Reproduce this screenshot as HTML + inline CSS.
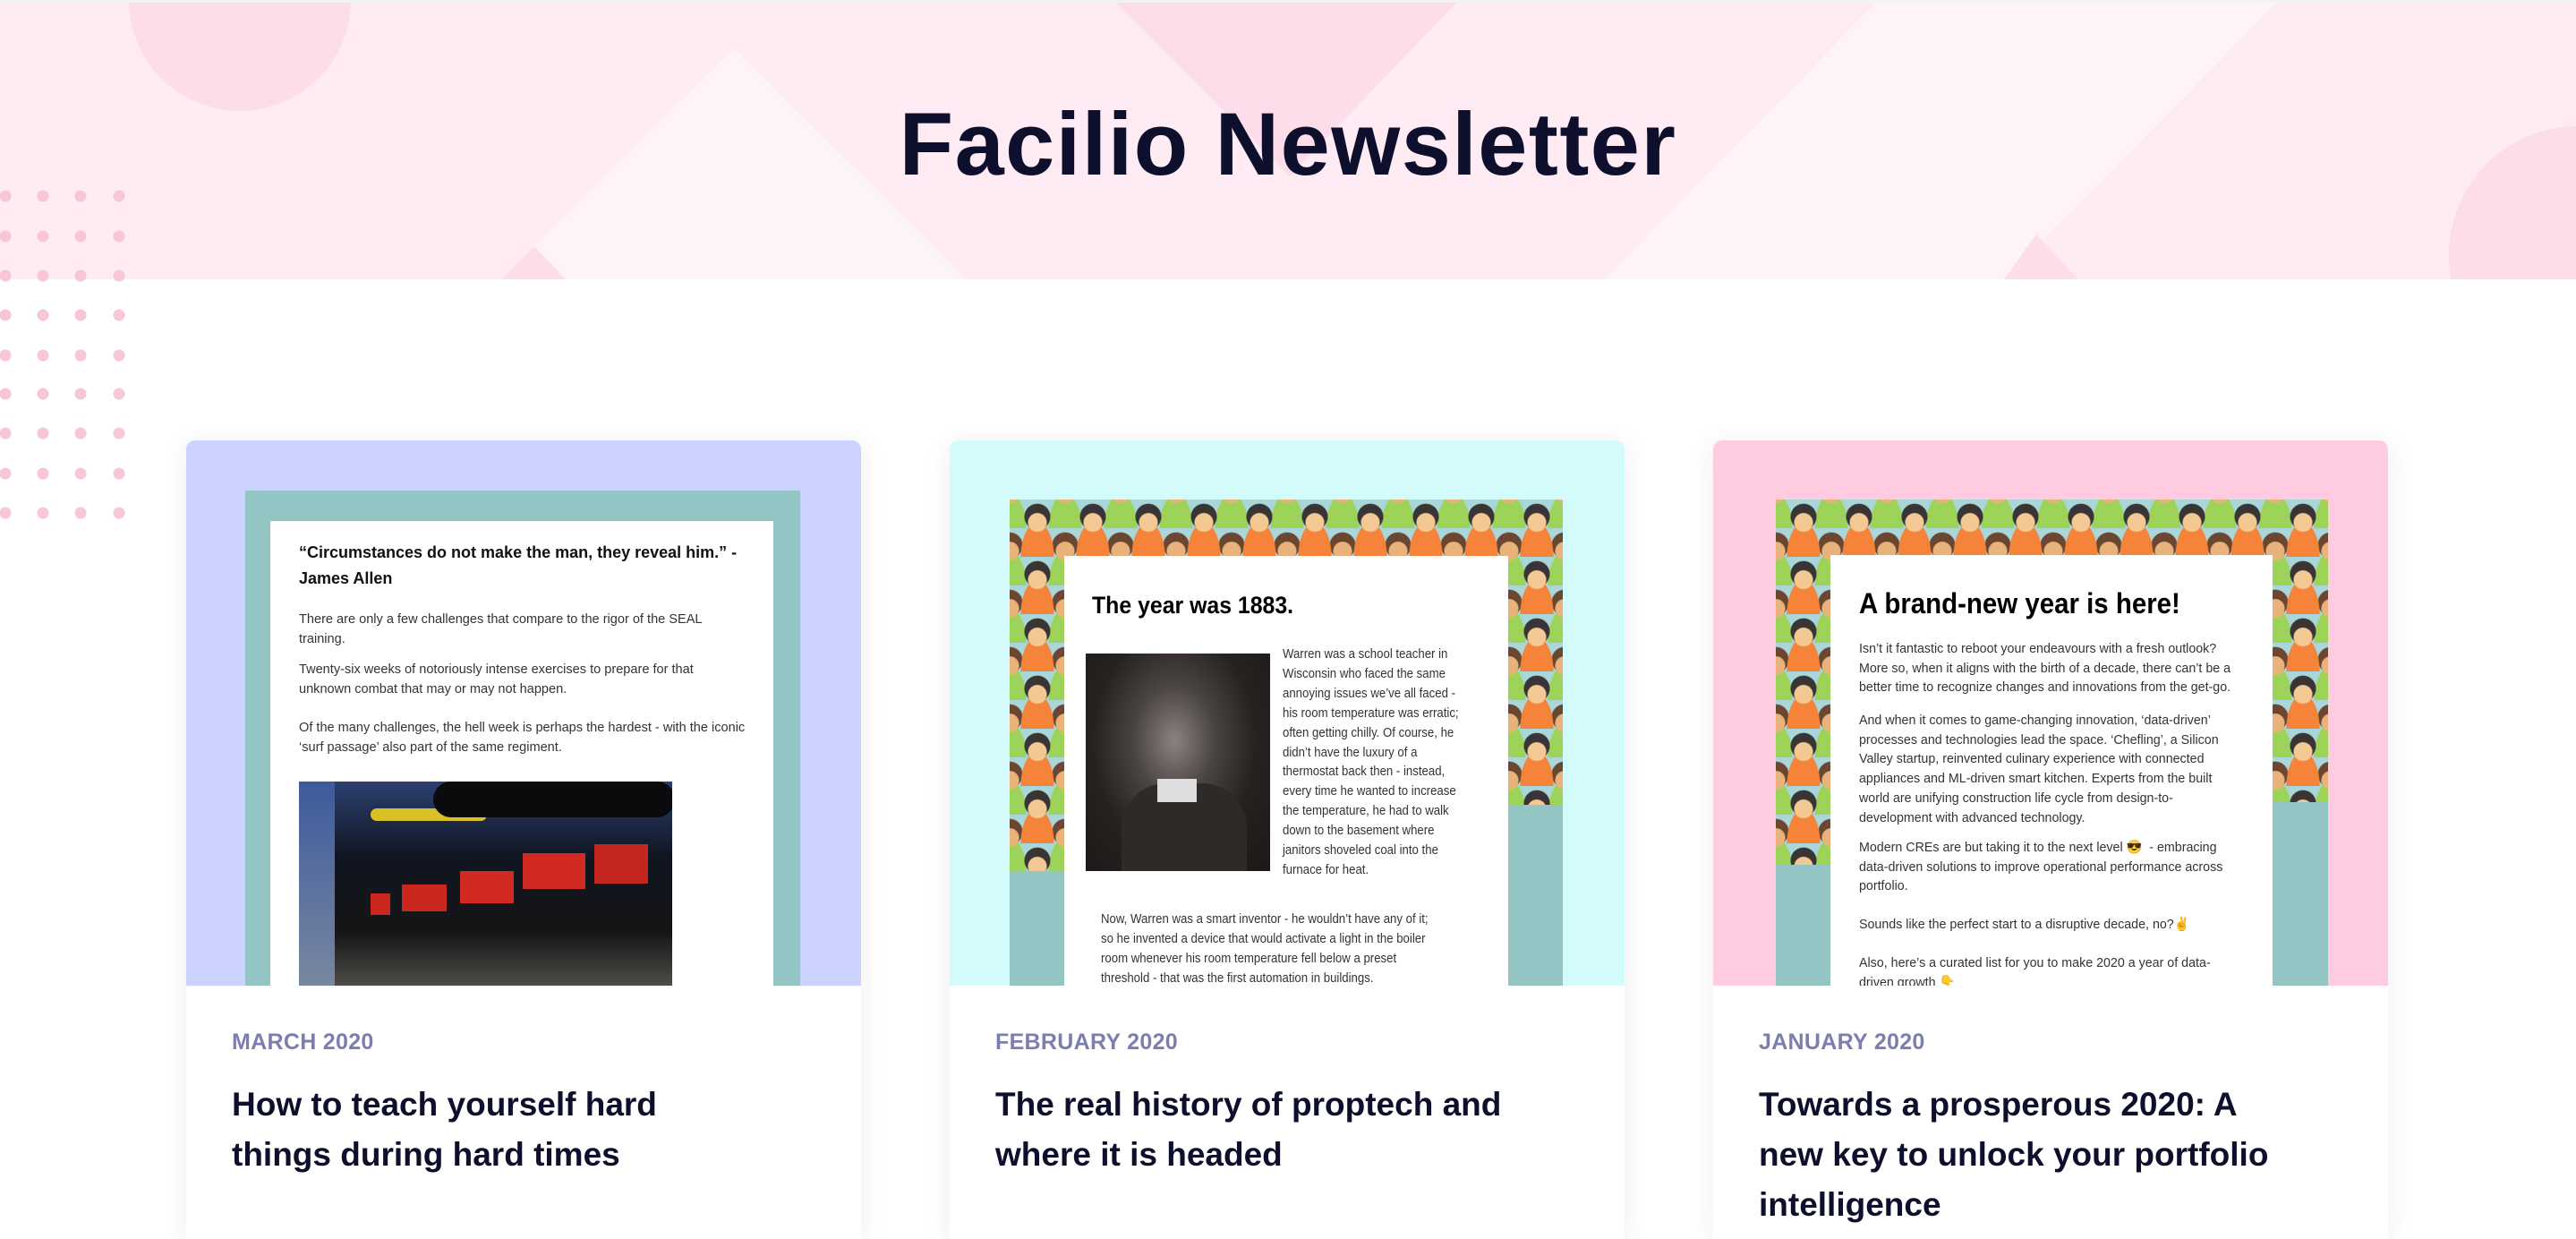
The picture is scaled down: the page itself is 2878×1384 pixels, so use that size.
<!DOCTYPE html>
<html style="overflow:hidden;width:2878px;height:1384px"><head><meta charset="utf-8">
<style>
*{margin:0;padding:0;box-sizing:border-box}
body{width:2878px;height:1384px;overflow:hidden;background:#fff;font-family:"Liberation Sans",Arial,sans-serif;position:relative}
.abs{position:absolute}
.card{position:absolute;top:492px;width:754px;height:892px;background:#fff;border-radius:10px 10px 0 0;box-shadow:0 4px 30px rgba(40,40,80,0.08);overflow:hidden}
.top{position:absolute;left:0;top:0;width:100%;height:609px;overflow:hidden}
.date{position:absolute;left:51px;top:658px;font-size:25px;font-weight:bold;color:#7b7eb0;letter-spacing:0.3px}
.ttl{position:absolute;left:51px;top:714px;font-size:37px;font-weight:bold;color:#0d0f2c;line-height:56px;white-space:pre}
.txt{position:absolute;white-space:pre;color:#333;transform-origin:0 0}
.people{position:absolute;background-color:#a9d6d9;
background-image:
radial-gradient(circle at 50% 40%,#f3c892 0 10px,transparent 11px),
radial-gradient(circle at 50% 30%,#3a3535 0 14px,transparent 15px),
radial-gradient(ellipse at 50% 100%,#f5843a 0 18px,transparent 19px),
radial-gradient(circle at 50% 40%,#e9b27a 0 10px,transparent 11px),
radial-gradient(circle at 50% 30%,#6b4630 0 14px,transparent 15px),
radial-gradient(ellipse at 50% 100%,#9ed35a 0 18px,transparent 19px);
background-size:62px 64px,62px 64px,62px 64px,62px 64px,62px 64px,62px 64px;
background-position:0 0,0 0,0 0,31px 32px,31px 32px,31px 32px}
</style></head><body>

<div class="abs" style="left:0;top:0;width:2878px;height:312px;background:#feebf3;overflow:hidden">
<svg width="2878" height="312" style="position:absolute;left:0;top:0">
<circle cx="268" cy="0" r="124" fill="#fddde9"/>
<polygon points="820,54 1079,312 560,312" fill="#fef4f8"/>
<polygon points="597,275 632,312 560,312" fill="#fddde9"/>
<polygon points="1243,0 1630,0 1441,197" fill="#fddde9"/>
<polygon points="2099,0 2547,0 2239,312 1792,312" fill="#fef4f8"/>
<polygon points="2275,262 2322,312 2239,312" fill="#fddde9"/>
<circle cx="2880" cy="285" r="144" fill="#fddde9"/>
</svg>
<div class="abs" style="left:0;top:0;width:2878px;height:3px;background:#f3f3f3"></div>
</div>
<div class="abs" style="left:0;top:103px;width:2878px;text-align:center;font-size:99px;font-weight:bold;color:#0d0f2c;letter-spacing:1.5px;line-height:115px">Facilio Newsletter</div>

<svg class="abs" style="left:0;top:200px" width="150" height="400">
<g fill="#f7c6d8">
<circle cx="6" cy="19" r="6.5"/><circle cx="48" cy="19" r="6.5"/><circle cx="90" cy="19" r="6.5"/><circle cx="133" cy="19" r="6.5"/>
<circle cx="6" cy="64" r="6.5"/><circle cx="48" cy="64" r="6.5"/><circle cx="90" cy="64" r="6.5"/><circle cx="133" cy="64" r="6.5"/>
<circle cx="6" cy="108" r="6.5"/><circle cx="48" cy="108" r="6.5"/><circle cx="90" cy="108" r="6.5"/><circle cx="133" cy="108" r="6.5"/>
<circle cx="6" cy="152" r="6.5"/><circle cx="48" cy="152" r="6.5"/><circle cx="90" cy="152" r="6.5"/><circle cx="133" cy="152" r="6.5"/>
<circle cx="6" cy="197" r="6.5"/><circle cx="48" cy="197" r="6.5"/><circle cx="90" cy="197" r="6.5"/><circle cx="133" cy="197" r="6.5"/>
<circle cx="6" cy="240" r="6.5"/><circle cx="48" cy="240" r="6.5"/><circle cx="90" cy="240" r="6.5"/><circle cx="133" cy="240" r="6.5"/>
<circle cx="6" cy="284" r="6.5"/><circle cx="48" cy="284" r="6.5"/><circle cx="90" cy="284" r="6.5"/><circle cx="133" cy="284" r="6.5"/>
<circle cx="6" cy="329" r="6.5"/><circle cx="48" cy="329" r="6.5"/><circle cx="90" cy="329" r="6.5"/><circle cx="133" cy="329" r="6.5"/>
<circle cx="6" cy="373" r="6.5"/><circle cx="48" cy="373" r="6.5"/><circle cx="90" cy="373" r="6.5"/><circle cx="133" cy="373" r="6.5"/>
</g></svg>

<div class="card" style="left:208px">
 <div class="top" style="background:#cbd2fe">
  <div class="abs" style="left:66px;top:56px;width:620px;height:560px;background:#93c5c4"></div>
  <div class="abs" style="left:94px;top:90px;width:562px;height:530px;background:#fff"></div>
  <div class="txt" style="left:126px;top:111px;font-size:18px;font-weight:bold;color:#111;line-height:29px">“Circumstances do not make the man, they reveal him.” -
James Allen</div>
  <div class="txt" style="left:126px;top:189px;font-size:15px;line-height:22px;transform:scaleX(0.97)">There are only a few challenges that compare to the rigor of the SEAL
training.</div>
  <div class="txt" style="left:126px;top:245px;font-size:15px;line-height:22px;transform:scaleX(0.97)">Twenty-six weeks of notoriously intense exercises to prepare for that
unknown combat that may or may not happen.</div>
  <div class="txt" style="left:126px;top:310px;font-size:15px;line-height:22px;transform:scaleX(0.97)">Of the many challenges, the hell week is perhaps the hardest - with the iconic
‘surf passage’ also part of the same regiment.</div>
  <div class="abs" style="left:126px;top:381px;width:417px;height:240px;background:linear-gradient(180deg,#2b3f70 0%,#101520 35%,#151515 70%,#5a5753 100%);overflow:hidden">
   <div class="abs" style="left:80px;top:30px;width:130px;height:14px;background:#d7c126;border-radius:7px"></div>
   <div class="abs" style="left:150px;top:0;width:270px;height:40px;background:#0b0b0e;border-radius:20px"></div>
   <div class="abs" style="left:80px;top:125px;width:22px;height:24px;background:#c8261f"></div>
   <div class="abs" style="left:115px;top:115px;width:50px;height:30px;background:#c8261f"></div>
   <div class="abs" style="left:180px;top:100px;width:60px;height:36px;background:#d02a22"></div>
   <div class="abs" style="left:250px;top:80px;width:70px;height:40px;background:#d02a22"></div>
   <div class="abs" style="left:330px;top:70px;width:60px;height:44px;background:#c42620"></div>
   <div class="abs" style="left:0;top:0;width:40px;height:240px;background:linear-gradient(#3d5a9c,#7c8aa0)"></div>
  </div>
 </div>
 <div class="date">MARCH 2020</div>
 <div class="ttl">How to teach yourself hard
things during hard times</div>
</div>

<div class="card" style="left:1061px">
 <div class="top" style="background:#d3fbfb">
  <div class="people" style="left:67px;top:66px;width:618px;height:560px"></div>
  <div class="abs" style="left:67px;top:481px;width:61px;height:140px;background:#93c5c4"></div>
  <div class="abs" style="left:624px;top:407px;width:61px;height:220px;background:#93c5c4"></div>
  <div class="abs" style="left:128px;top:129px;width:496px;height:490px;background:#fff"></div>
  <div class="txt" style="left:159px;top:169px;font-size:27px;font-weight:bold;color:#000;transform:scaleX(0.92)">The year was 1883.</div>
  <div class="abs" style="left:152px;top:238px;width:206px;height:243px;background:radial-gradient(ellipse at 48% 40%,#8a837f 0%,#4a4442 30%,#262221 60%,#1b1817 100%);overflow:hidden">
   <div class="abs" style="left:40px;top:145px;width:140px;height:100px;background:#2e2a28;border-radius:50px 50px 0 0"></div>
   <div class="abs" style="left:80px;top:140px;width:44px;height:26px;background:#ddd"></div>
  </div>
  <div class="txt" style="left:372px;top:228px;font-size:15px;line-height:21.9px;transform:scaleX(0.88)">Warren was a school teacher in
Wisconsin who faced the same
annoying issues we’ve all faced -
his room temperature was erratic;
often getting chilly. Of course, he
didn’t have the luxury of a
thermostat back then - instead,
every time he wanted to increase
the temperature, he had to walk
down to the basement where
janitors shoveled coal into the
furnace for heat.</div>
  <div class="txt" style="left:169px;top:524px;font-size:15px;line-height:21.9px;transform:scaleX(0.88)">Now, Warren was a smart inventor - he wouldn’t have any of it;
so he invented a device that would activate a light in the boiler
room whenever his room temperature fell below a preset
threshold - that was the first automation in buildings.</div>
 </div>
 <div class="date">FEBRUARY 2020</div>
 <div class="ttl">The real history of proptech and
where it is headed</div>
</div>

<div class="card" style="left:1914px">
 <div class="top" style="background:#fecbe0">
  <div class="people" style="left:70px;top:66px;width:617px;height:560px"></div>
  <div class="abs" style="left:70px;top:474px;width:61px;height:150px;background:#93c5c4"></div>
  <div class="abs" style="left:625px;top:404px;width:62px;height:220px;background:#93c5c4"></div>
  <div class="abs" style="left:131px;top:128px;width:494px;height:490px;background:#fff"></div>
  <div class="txt" style="left:163px;top:164px;font-size:32px;font-weight:bold;color:#000;transform:scaleX(0.92)">A brand-new year is here!</div>
  <div class="txt" style="left:163px;top:222px;font-size:15px;line-height:21.7px;transform:scaleX(0.95)">Isn’t it fantastic to reboot your endeavours with a fresh outlook?
More so, when it aligns with the birth of a decade, there can’t be a
better time to recognize changes and innovations from the get-go.</div>
  <div class="txt" style="left:163px;top:302px;font-size:15px;line-height:21.7px;transform:scaleX(0.95)">And when it comes to game-changing innovation, ‘data-driven’
processes and technologies lead the space. ‘Chefling’, a Silicon
Valley startup, reinvented culinary experience with connected
appliances and ML-driven smart kitchen. Experts from the built
world are unifying construction life cycle from design-to-
development with advanced technology.</div>
  <div class="txt" style="left:163px;top:444px;font-size:15px;line-height:21.7px;transform:scaleX(0.95)">Modern CREs are but taking it to the next level 😎  - embracing
data-driven solutions to improve operational performance across
portfolio.</div>
  <div class="txt" style="left:163px;top:530px;font-size:15px;line-height:21.7px;transform:scaleX(0.95)">Sounds like the perfect start to a disruptive decade, no?✌</div>
  <div class="txt" style="left:163px;top:573px;font-size:15px;line-height:21.7px;transform:scaleX(0.95)">Also, here’s a curated list for you to make 2020 a year of data-
driven growth 👇</div>
 </div>
 <div class="date">JANUARY 2020</div>
 <div class="ttl">Towards a prosperous 2020: A
new key to unlock your portfolio
intelligence</div>
</div>

</body></html>
